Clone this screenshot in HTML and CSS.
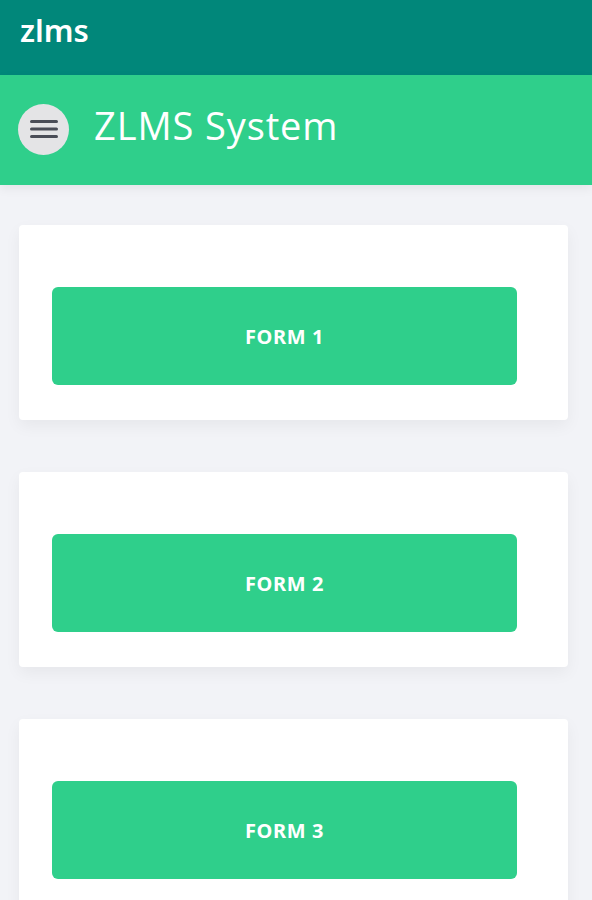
FILE: index.html
```html
<!DOCTYPE html>
<html>
<head>
	<title>zlms</title>
	<link rel="stylesheet" href="styles.css">
</head>
<body>
	<div class="appbar">zlms</div>
	<div class="header">
		<button class="menu" aria-label="Menu">
			<svg width="30" height="22" viewBox="0 0 30 22">
				<rect x="1" y="2" width="28" height="3" rx="1.5" fill="#4a4d57"/>
				<rect x="1" y="9.5" width="28" height="3" rx="1.5" fill="#4a4d57"/>
				<rect x="1" y="17" width="28" height="3" rx="1.5" fill="#4a4d57"/>
			</svg>
		</button>
		<h1>ZLMS System</h1>
	</div>
	<div class="list">
		<div class="card"><a href="#" class="form-btn">FORM 1</a></div>
		<div class="card"><a href="#" class="form-btn">FORM 2</a></div>
		<div class="card"><a href="#" class="form-btn">FORM 3</a></div>
	</div>
</body>
</html>
```

FILE: styles.css
```css
body {
	margin: 0;
	background: #f2f3f7;
	font-family: "Open Sans", "Noto Sans", sans-serif;
	overflow: hidden;
}

.appbar {
	height: 75px;
	background: #01877a;
	color: white;
	font-family: "Noto Sans", sans-serif;
	font-weight: 600;
	font-size: 31px;
	line-height: 60px;
	padding-left: 20px;
	box-sizing: border-box;
}

.header {
	height: 110px;
	background: #2fcf8b;
	display: flex;
	align-items: center;
	padding-left: 18px;
	gap: 25px;
	box-shadow: 0 4px 10px rgba(0,0,0,0.06);
	padding-bottom: 2px;
	box-sizing: border-box;
}

.menu {
	width: 51px;
	height: 51px;
	border-radius: 50%;
	border: none;
	background: #e4e4e6;
	display: flex;
	align-items: center;
	justify-content: center;
	padding: 0;
}

.header h1 {
	margin: 0 0 8px 0;
	color: white;
	font-weight: 400;
	font-size: 38px;
	letter-spacing: 0.9px;
}

.list {
	padding: 40px 24px 0 19px;
	display: flex;
	flex-direction: column;
	gap: 52px;
}

.card {
	background: white;
	border-radius: 4px;
	box-shadow: 0 6px 16px rgba(0,0,0,0.05);
	padding: 62px 51px 35px 33px;
}

.form-btn {
	display: flex;
	align-items: center;
	justify-content: center;
	height: 98px;
	background: #2fcf8b;
	border-radius: 6px;
	color: white;
	text-decoration: none;
	font-family: "Noto Sans", sans-serif;
	font-weight: 700;
	font-size: 20px;
	letter-spacing: 0.6px;
}
```
